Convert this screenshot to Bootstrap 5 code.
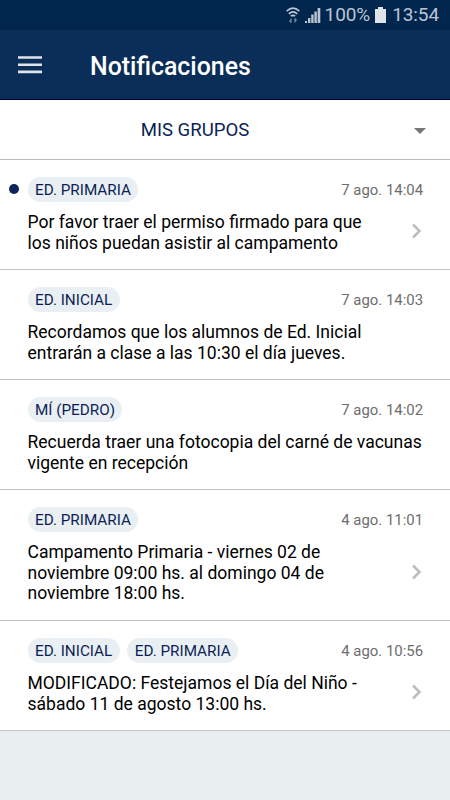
<!DOCTYPE html>
<html lang="es">
<head>
<meta charset="utf-8">
<meta name="viewport" content="width=device-width, initial-scale=1">
<title>Notificaciones</title>
<link href="https://cdn.jsdelivr.net/npm/bootstrap@5.3.0/dist/css/bootstrap.min.css" rel="stylesheet">
<style>
body{font-family:Roboto,"Noto Sans",sans-serif;background:#e9eef1;width:450px;height:800px;overflow:hidden;color:#000}
.status{height:30px;background:#00264d;color:#bcc5d2;font-size:19px;line-height:30px;padding-right:11px}
.status span{letter-spacing:-.1px}
.status .clock{margin-left:6px}
.status .wifi{margin-right:5px}
.status .battery{margin-left:5px}
.appbar{height:70px;background:#0b2e59;border-bottom:1px solid #00003c;padding:0 18px}
.appbar h1{font-size:24.9px;font-weight:500;line-height:30px;margin-left:48px;padding-top:5px}
.groups{height:60px;border-bottom:1px solid #bcbcbc;color:#0b1f56;font-size:18.6px;padding:2px 24px 0 0}
.groups .caption{width:390px}
.notice{height:110px;border-bottom:1px solid #c4c4c4;padding:17px 27px 0 27.5px}
.notice.tall{height:131px}
.tags{gap:7.5px}
.tag{height:25px;line-height:26px;border-radius:13px;background:#e9eff2;color:#0b1f56;font-size:15.25px;padding:0 7.5px}
.when{font-size:14.9px;color:#6d6d6d;line-height:26px}
.msg{font-size:17.52px;line-height:20.7px;margin-top:9px;white-space:nowrap}
.chevron{margin-top:6px}
.unread{left:9px;top:24px;width:10px;height:10px;background:#0b2559}
</style>
</head>
<body>
<header>
<div class="status d-flex justify-content-end align-items-center">
<svg class="wifi" width="14" height="18" viewBox="0 0 14 18" fill="none" stroke="#bcc5d2" stroke-width="1.6"><path d="M.7 5.2Q7-.8 13.3 5.2M2.8 7.8Q7 3.8 11.2 7.8M4.8 10.2Q7 8.4 9.2 10.2"/><path d="M5 12.500v4M3.500 14.500L5 16.500M9 16.500v-4M10.500 14.500L9 12.500" stroke="#7488a2" stroke-width="1.300"/></svg>
<svg width="16" height="16" viewBox="0 0 16 16" fill="#bcc5d2"><path d="M0 14h2v2H0zM3 11h2.400v5H3zM6.200 7.500h2.400V16H6.200zM9.400 4.500h2.400V16H9.400zM12.600 1h2.700v15h-2.700z"/></svg>
<span class="ms-1">100%</span>
<svg class="battery" width="11" height="16" viewBox="0 0 11 16" fill="#dfe4eb"><path d="M3 0h5v2h3v14H0V2h3z"/></svg>
<span class="clock">13:54</span>
</div>
<nav class="appbar d-flex align-items-center text-white">
<svg width="24" height="18" viewBox="0 0 24 18" fill="#dfe4eb"><path d="M0 .2h24v2.600H0zM0 7.500h24v2.500H0zM0 14.600h24v2.600H0z"/></svg>
<h1 class="mb-0">Notificaciones</h1>
</nav>
</header>
<main>
<div class="groups d-flex align-items-center justify-content-between bg-white"><span class="caption text-center">MIS GRUPOS</span><svg width="12" height="6" viewBox="0 0 12 6" fill="#777"><path d="M0 0h12L6 6z"/></svg></div>
<article class="notice bg-white position-relative">
<i class="unread rounded-circle position-absolute"></i>
<div class="d-flex justify-content-between"><span class="tag">ED. PRIMARIA</span><time class="when">7 ago. 14:04</time></div>
<div class="d-flex justify-content-between align-items-center"><p class="msg mb-0">Por favor traer el permiso firmado para que<br>los niños puedan asistir al campamento</p><svg class="chevron" width="12" height="16" viewBox="0 0 12 16" fill="none" stroke="#bdbdbd" stroke-width="2.5"><path d="M2 1.500L8.500 8 2 14.500"/></svg></div>
</article>
<article class="notice bg-white">
<div class="d-flex justify-content-between"><span class="tag">ED. INICIAL</span><time class="when">7 ago. 14:03</time></div>
<p class="msg mb-0">Recordamos que los alumnos de Ed. Inicial<br>entrarán a clase a las 10:30 el día jueves.</p>
</article>
<article class="notice bg-white">
<div class="d-flex justify-content-between"><span class="tag">MÍ (PEDRO)</span><time class="when">7 ago. 14:02</time></div>
<p class="msg mb-0">Recuerda traer una fotocopia del carné de vacunas<br>vigente en recepción</p>
</article>
<article class="notice tall bg-white">
<div class="d-flex justify-content-between"><span class="tag">ED. PRIMARIA</span><time class="when">4 ago. 11:01</time></div>
<div class="d-flex justify-content-between align-items-center"><p class="msg mb-0">Campamento Primaria - viernes 02 de<br>noviembre 09:00 hs. al domingo 04 de<br>noviembre 18:00 hs.</p><svg class="chevron" width="12" height="16" viewBox="0 0 12 16" fill="none" stroke="#bdbdbd" stroke-width="2.5"><path d="M2 1.500L8.500 8 2 14.500"/></svg></div>
</article>
<article class="notice bg-white">
<div class="d-flex justify-content-between"><div class="tags d-flex"><span class="tag">ED. INICIAL</span><span class="tag">ED. PRIMARIA</span></div><time class="when">4 ago. 10:56</time></div>
<div class="d-flex justify-content-between align-items-center"><p class="msg mb-0">MODIFICADO: Festejamos el Día del Niño -<br>sábado 11 de agosto 13:00 hs.</p><svg class="chevron" width="12" height="16" viewBox="0 0 12 16" fill="none" stroke="#bdbdbd" stroke-width="2.5"><path d="M2 1.500L8.500 8 2 14.500"/></svg></div>
</article>
</main>
<script src="https://cdn.jsdelivr.net/npm/bootstrap@5.3.0/dist/js/bootstrap.bundle.min.js"></script>
</body>
</html>
